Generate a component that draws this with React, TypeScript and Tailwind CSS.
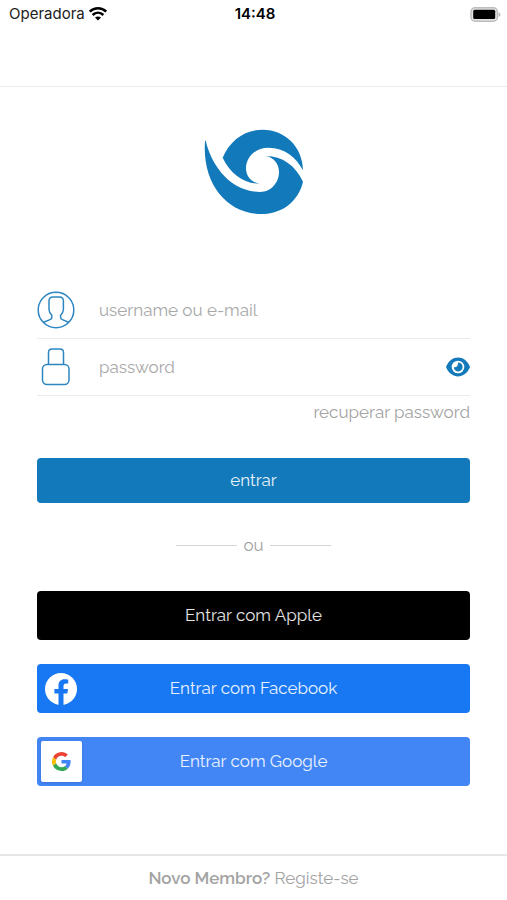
import { useState } from "react";

function Wifi() {
  return (
    <svg viewBox="0 0 18 14" className="h-[14px] w-[18px]" fill="none" stroke="#000" strokeWidth="2.6" aria-hidden="true">
      <path d="M0.8 4.6 C5.4 0.2 12.6 0.2 17.2 4.6" />
      <path d="M3.6 8 C6.8 5 11.2 5 14.4 8" />
      <path d="M6 10.6 C7.8 9 10.2 9 12 10.6 L9 13.6Z" fill="#000" stroke="none" />
    </svg>
  );
}

function Battery() {
  return (
    <svg viewBox="0 0 31 15" className="h-[15px] w-[31px]" aria-hidden="true">
      <rect x="1" y="0.8" width="26.4" height="13.4" rx="4" fill="#e4e4e4" stroke="#bdbdbd" strokeWidth="1.5" />
      <rect x="3.2" y="2.8" width="22" height="9.2" rx="1.5" fill="#000" />
      <path d="M28.6 5.2 C31 6 31 9 28.6 9.8Z" fill="#b5b5b5" />
    </svg>
  );
}

function Logo() {
  return (
    <svg viewBox="42 42 297 255" className="h-[85px] w-[99px] overflow-visible" fill="#1279ba" role="img" aria-label="Logo">
      <path d="M98 128 C120 75 165 44 218 44 C285 44 338 95 339 166 C318 126 285 99 235 98 C195 98 168 128 168 160 C168 185 185 203 210 206 C162 206 122 178 98 128Z" />
      <path d="M47 76 C60 140 114 230 210 231 C246 231 267 200 267 172 C267 145 250 126 226 123 C275 122 315 150 339 200 C325 260 275 297 215 297 C110 297 36 205 45 80Z" />
    </svg>
  );
}

function UserIcon() {
  return (
    <svg viewBox="0 0 38 38" className="h-[38px] w-[38px]" fill="none" stroke="#2c86c2" strokeWidth="1.5" aria-hidden="true">
      <circle cx="19" cy="19" r="17.8" />
      <path d="M6 31.5 L13 28.6 Q14.8 28 14.8 26.5 V24.2 Q12.2 22 12 18.5 V10 Q12 6 16 6 H22.4 Q26.4 6 26.4 10 V18.5 Q26.2 22 23.6 24.2 V26.5 Q23.6 28 25.4 28.6 L32 31.5" />
    </svg>
  );
}

function LockIcon() {
  return (
    <svg viewBox="0 0 38 38" className="h-[38px] w-[38px]" fill="none" stroke="#2c86c2" strokeWidth="1.5" aria-hidden="true">
      <path d="M11.5 16.5 V4.5 Q11.5 0.9 15.1 0.9 H22.9 Q26.5 0.9 26.5 4.5 V16.5" />
      <rect x="5.5" y="16.5" width="26.5" height="20" rx="4.5" />
    </svg>
  );
}

function EyeIcon() {
  return (
    <svg viewBox="0 0 24 20" className="h-[20px] w-[24px]" aria-hidden="true">
      <path d="M0 10 C5 -2.6 19 -2.6 24 10 C19 22.6 5 22.6 0 10Z" fill="#1279ba" />
      <circle cx="12" cy="10" r="6.3" fill="#fff" />
      <path d="M12.2 5.6 A4.4 4.4 0 1 1 7.8 10.2 Q11.8 11.2 12.2 5.6Z" fill="#1279ba" />
    </svg>
  );
}

function FacebookIcon() {
  return (
    <svg viewBox="0 0 32 32" className="h-8 w-8" aria-hidden="true">
      <circle cx="16" cy="16" r="16" fill="#fff" />
      <path d="M13.5 32 V20.6 H9.4 V16 H13.5 V12.4 C13.5 8.4 15.9 6.2 19.6 6.2 C21.3 6.2 23.2 6.5 23.2 6.5 V10.4 H21.2 C19.1 10.4 18.5 11.7 18.5 13 V16 H23 L22.3 20.6 H18.5 V32Z" fill="#1877f2" />
    </svg>
  );
}

function GoogleIcon() {
  return (
    <svg viewBox="0 0 48 48" className="h-[19px] w-[19px]" aria-hidden="true">
      <path fill="#EA4335" d="M24 9.5c3.54 0 6.71 1.22 9.21 3.6l6.85-6.85C35.9 2.38 30.47 0 24 0 14.62 0 6.51 5.38 2.56 13.22l7.98 6.19C12.43 13.72 17.74 9.5 24 9.5z" />
      <path fill="#4285F4" d="M46.98 24.55c0-1.57-.15-3.09-.38-4.55H24v9.02h12.94c-.58 2.96-2.26 5.48-4.78 7.18l7.73 6c4.51-4.18 7.09-10.36 7.09-17.65z" />
      <path fill="#FBBC05" d="M10.53 28.59c-.48-1.45-.76-2.99-.76-4.59s.27-3.14.76-4.59l-7.98-6.19C.92 16.46 0 20.12 0 24c0 3.88.92 7.54 2.56 10.78l7.97-6.19z" />
      <path fill="#34A853" d="M24 48c6.48 0 11.93-2.13 15.89-5.81l-7.73-6c-2.15 1.45-4.92 2.3-8.16 2.3-6.26 0-11.57-4.22-13.47-9.91l-7.98 6.19C6.51 42.62 14.62 48 24 48z" />
    </svg>
  );
}

const field =
  "min-w-0 flex-1 bg-transparent text-[17px] leading-6 text-gray-600 outline-none placeholder:text-[#a8a8a8]";
const social = "grid h-[49px] w-full grid-cols-[48px_1fr_48px] items-center rounded-[4px] text-[17px] text-white/90";

export default function App() {
  const [visible, setVisible] = useState(false);

  return (
    <div className="flex min-h-screen flex-col bg-white font-['Raleway','Open_Sans',sans-serif] font-normal text-[#a3a3a3]">
      <header className="h-[87px] border-b border-[#ebebeb]">
        <div className="grid grid-cols-3 items-center pr-[6px] pl-[9px] font-['Inter',sans-serif] text-[15px] leading-7 text-[#222]">
          <div className="flex items-center gap-1">
            Operadora
            <Wifi />
          </div>
          <div className="text-center font-semibold text-black">14:48</div>
          <div className="flex justify-end">
            <Battery />
          </div>
        </div>
      </header>

      <main className="flex flex-1 flex-col px-[37px] pt-[42px]">
        <div className="flex justify-center">
          <Logo />
        </div>

        <form className="mt-[68px]" onSubmit={(e) => e.preventDefault()}>
          <div className="flex h-[57px] items-center gap-6 border-b border-[#ebebeb]">
            <UserIcon />
            <input className={field} aria-label="username ou e-mail" placeholder="username ou e-mail" />
          </div>
          <div className="flex h-[57px] items-center gap-6 border-b border-[#ebebeb]">
            <LockIcon />
            <input
              className={field}
              type={visible ? "text" : "password"}
              aria-label="password"
              placeholder="password"
            />
            <button type="button" aria-label="mostrar password" onClick={() => setVisible(!visible)}>
              <EyeIcon />
            </button>
          </div>
          <div className="mt-1 text-right text-[17px] leading-6">
            <a href="#recuperar">recuperar password</a>
          </div>
          <button type="submit" className="mt-[34px] h-[45px] w-full rounded-[4px] bg-[#1279ba] text-[17px] text-white/90">
            entrar
          </button>
        </form>

        <div className="mt-[30px] flex items-center justify-center gap-[6px] text-[17px] leading-6">
          <span className="h-px w-[61px] bg-[#d4d4d4]" />
          <span>ou</span>
          <span className="h-px w-[61px] bg-[#d4d4d4]" />
        </div>

        <div className="mt-[34px] flex flex-col gap-[24px] pb-8">
          <button type="button" className={`${social} bg-black`}>
            <span className="col-start-2">Entrar com Apple</span>
          </button>
          <button type="button" className={`${social} bg-[#1877f2]`}>
            <span className="pl-[8px]">
              <FacebookIcon />
            </span>
            <span>Entrar com Facebook</span>
          </button>
          <button type="button" className={`${social} bg-[#4285f4]`}>
            <span className="pl-1">
              <span className="flex h-[41px] w-[41px] items-center justify-center rounded-[2px] bg-white shadow">
                <GoogleIcon />
              </span>
            </span>
            <span>Entrar com Google</span>
          </button>
        </div>
      </main>

      <footer className="border-t-2 border-[#e6e6e6] py-[10px] text-center text-[17px] leading-6">
        <span className="font-semibold">Novo Membro?</span> <a href="#registo">Registe-se</a>
      </footer>
    </div>
  );
}
